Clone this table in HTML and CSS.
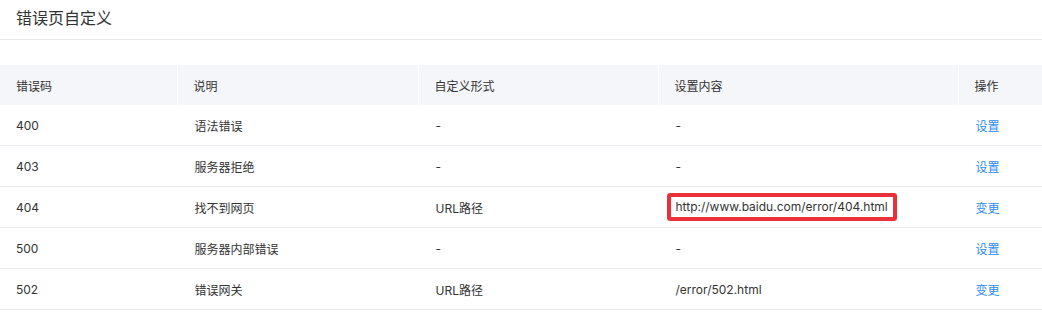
FILE: index.html
```html
<!DOCTYPE html>
<html lang="zh-CN">
<head>
<meta charset="utf-8">
<title>错误页自定义</title>
<link rel="stylesheet" href="styles.css">
</head>
<body>
<div class="page">
  <h1 class="title">错误页自定义</h1>
  <table class="grid">
    <colgroup>
      <col class="c1"><col class="c2"><col class="c3"><col class="c4"><col class="c5">
    </colgroup>
    <thead>
      <tr><th>错误码</th><th>说明</th><th>自定义形式</th><th>设置内容</th><th>操作</th></tr>
    </thead>
    <tbody>
      <tr><td>400</td><td>语法错误</td><td>-</td><td>-</td><td><a class="link" href="#">设置</a></td></tr>
      <tr><td>403</td><td>服务器拒绝</td><td>-</td><td>-</td><td><a class="link" href="#">设置</a></td></tr>
      <tr><td>404</td><td>找不到网页</td><td>URL路径</td><td><span class="mark">http://www.baidu.com/error/404.html</span></td><td><a class="link" href="#">变更</a></td></tr>
      <tr><td>500</td><td>服务器内部错误</td><td>-</td><td>-</td><td><a class="link" href="#">设置</a></td></tr>
      <tr><td>502</td><td>错误网关</td><td>URL路径</td><td>/error/502.html</td><td><a class="link" href="#">变更</a></td></tr>
    </tbody>
  </table>
</div>
</body>
</html>
```

FILE: styles.css
```css
html, body {
  margin: 0;
  padding: 0;
  background: #fff;
}
.page {
  font-family: Inter, "Noto Sans CJK SC", sans-serif;
  color: #333;
}
.title {
  margin: 0;
  height: 40px;
  line-height: 35px;
  padding-left: 16px;
  font-family: "Noto Sans CJK SC", sans-serif;
  font-size: 16px;
  font-weight: 400;
  color: #333;
  border-bottom: 1px solid #e8e8e8;
  box-sizing: border-box;
}
.grid {
  margin-top: 25px;
  width: 100%;
  border-collapse: collapse;
  table-layout: fixed;
  font-size: 12px;
}
.c1 { width: 177px; }
.c2 { width: 241px; }
.c3 { width: 240px; }
.c4 { width: 300px; }
.grid th {
  height: 40px;
  padding: 0 0 0 16px;
  text-align: left;
  font-weight: 400;
  background: #f5f6f9;
  color: #333;
  border-left: 1px solid #fff;
}
.grid th:first-child,
.grid td:first-child {
  border-left: 0;
  padding-left: 16px;
}
.grid td {
  height: 40px;
  padding: 0 0 0 17px;
  border-bottom: 1px solid #e9ebf1;
  border-left: 1px solid transparent;
}
.link {
  color: #2d8cf0;
  text-decoration: none;
}
.mark {
  display: inline-block;
  margin-left: -9px;
  padding: 0 5px 0 5px;
  line-height: 20px;
  border: 4px solid #e8313b;
  border-radius: 3px;
}
```
